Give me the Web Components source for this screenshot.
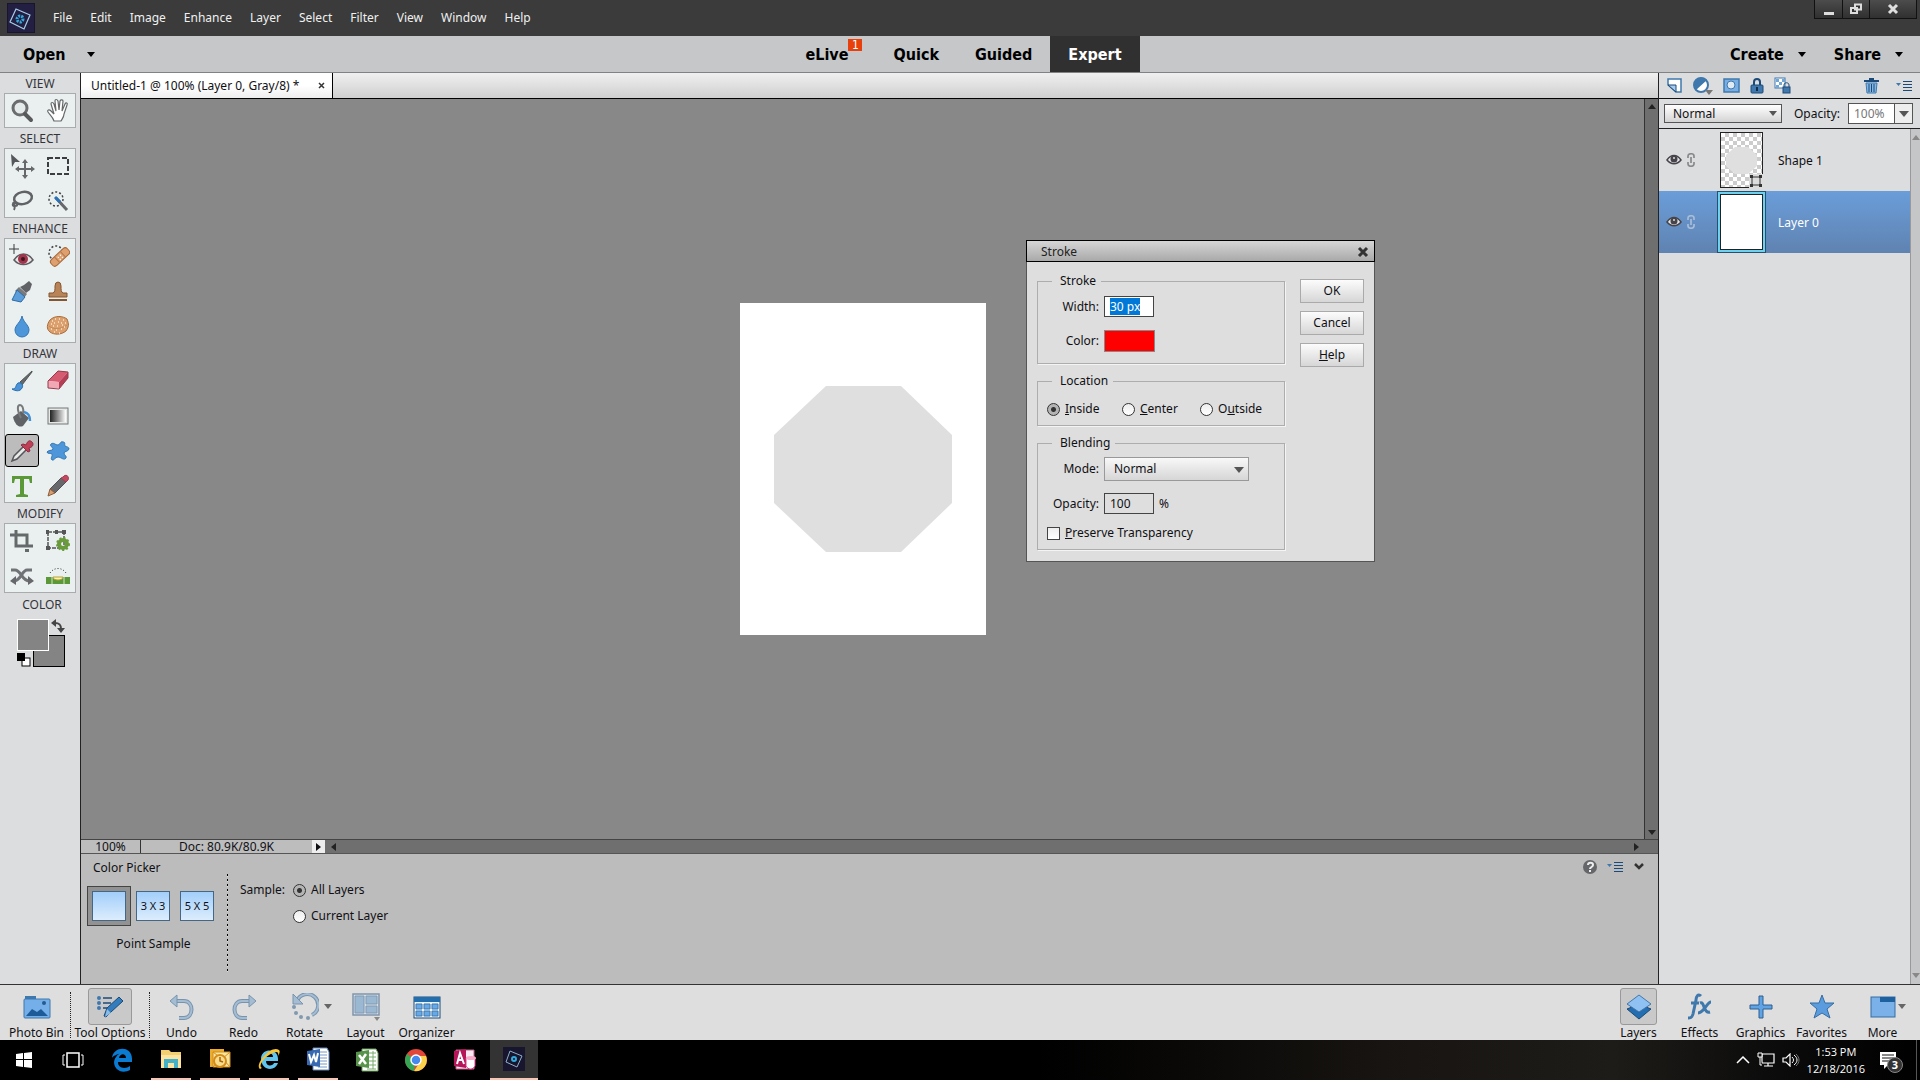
<!DOCTYPE html>
<html lang="en">
<head>
<meta charset="utf-8">
<title>Photo Editor</title>
<style>
  body {
    margin: 0;
    background: #dcdddf;
    color: #101014;
    font: 12px/16px "Noto Sans", "DejaVu Sans Condensed", sans-serif;
  }
</style>
</head>
<body>
<pe-app></pe-app>

<script>
const BLUE = '#3f78ad';
const DARK = '#1c4a78';

// name: [ width, height, markup ]
const ICONS = {
  logo: [28, 30, '<rect width="28" height="30" fill="#17162e"/><rect x="1" y="1" width="26" height="28" fill="#221f42"/><path d="M9 6l14 6-6 14-14-7z" fill="none" stroke="#a7cdea" stroke-width="1.200"/><circle cx="13" cy="16" r="3" fill="none" stroke="#35a9dc" stroke-width="3" stroke-dasharray="2 1"/>'],
  logoSmall: [22, 24, '<rect width="22" height="24" fill="#17162e"/><path d="M7 4l12 5-5 11-11-5z" fill="none" stroke="#8fb0cc"/><circle cx="11" cy="12" r="2" fill="none" stroke="#35a9dc" stroke-width="2"/>'],
  down: [8, 5, '<path d="M0 0h8l-4 5z" fill="currentColor"/>'],
  downBig: [10, 6, '<path d="M0 0h10l-5 6z" fill="#555"/>'],
  up: [8, 5, '<path d="M0 5h8l-4-5z" fill="currentColor"/>'],
  left: [5, 8, '<path d="M5 0v8l-5-4z" fill="currentColor"/>'],
  right: [5, 8, '<path d="M0 0v8l5-4z" fill="currentColor"/>'],
  close: [12, 12, '<path d="M2 2l8 8M10 2l-8 8" stroke="currentColor" stroke-width="3"/>'],
  closeSmall: [8, 8, '<path d="M1 1l5 5M6 1l-5 5" stroke="#333" stroke-width="1.500"/>'],
  minimise: [10, 12, '<path d="M0 9h10v3H0z" fill="#ddd"/>'],
  restore: [12, 12, '<path d="M5 1.500h6v5H5zM1 5h6v5H1z" fill="#333" stroke="#ddd" stroke-width="2"/>'],

  zoom: [24, 24, '<circle cx="10" cy="9" r="7" fill="#e4eaea" stroke="#6a6c6e" stroke-width="3"/><path d="M15 15l6 6" stroke="#58595b" stroke-width="4" stroke-linecap="round"/>'],
  hand: [24, 26, '<path d="M8 23c-1-4-4-6-6-9-1-2 1-3 3-1l3 3L5 6c0-2 2-2 3 0l2 7-1-10c0-2 2-2 3 0l1 9 1-9c1-2 3-1 3 0l-1 10 3-7c1-2 3-1 2 1l-3 9c0 3-2 5-3 7z" fill="#fff" stroke="#66686a" stroke-width="1.200"/>'],
  move: [26, 26, '<path d="M2 1l9 8H6l-3 5z" fill="#55575a"/><path d="M16 8v16M8 16h16" stroke="#66686b" stroke-width="2"/><path d="M13 10l3-4 3 4zM13 22l3 4 3-4zM10 13l-4 3 4 3zM22 13l4 3-4 3z" fill="#66686b"/>'],
  marquee: [24, 20, '<rect x="2" y="2" width="20" height="16" fill="none" stroke="#3c3d40" stroke-width="2" stroke-dasharray="5 2"/>'],
  lasso: [24, 22, '<ellipse cx="13" cy="8" rx="9" ry="6" fill="none" stroke="#606265" stroke-width="2.500" transform="rotate(-12 13 8)"/><path d="M5 12c-3 1-3 4 0 4s3-3 0-3c-2 0 1 4-1 7" fill="none" stroke="#606265" stroke-width="2"/>'],
  wand: [24, 22, '<circle cx="10" cy="9" r="7" fill="none" stroke="#444" stroke-width="1.500" stroke-dasharray="2 2"/><path d="M10 8l11 12" stroke="#66686b" stroke-width="3"/><path d="M9 7l5 5" stroke="#2972b8" stroke-width="3"/>'],
  redeye: [26, 24, '<path d="M5 0v10M0 5h10" stroke="#3b3b3d"/><path d="M5 16c5-8 14-8 19 0-5 6-14 6-19 0z" fill="#e9e4e4" stroke="#5d5b60" stroke-width="1.500"/><circle cx="14" cy="15" r="5" fill="#a1344b"/><circle cx="14" cy="15" r="2" fill="#3b1820"/>'],
  bandage: [24, 24, '<circle cx="10" cy="9" r="7" fill="none" stroke="#444" stroke-width="1.500" stroke-dasharray="2 2"/><g transform="rotate(-43 14 13)"><rect x="3" y="9" width="22" height="8" rx="3" fill="#dfa06f" stroke="#a8683c"/><path d="M10 9v8M18 9v8" stroke="#b5784b"/><path d="M12 12h1M15 12h1M12 15h1M15 15h1" stroke="#fff" stroke-width="1.500"/></g>'],
  smart: [24, 24, '<path d="M14 6l5-4 3 3-2 6-4 3-6-6z" fill="#606265"/><path d="M9 8l8 7-3 4-9-7z" fill="#77797b"/><path d="M7 11l8 7-4 5-9-2z" fill="#5c9edb" stroke="#2d6ba6"/>'],
  stamp: [24, 22, '<path d="M9 6a3 4 0 1 1 6 0c0 4 0 6 2 7h4v4H3v-4h4c2-1 2-3 2-7z" fill="#b98358" stroke="#85552f"/><path d="M3 20h18" stroke="#85552f" stroke-width="2"/>'],
  drop: [20, 24, '<path d="M10 2c1 6 7 9 7 14a7 7 0 0 1-14 0c0-5 6-8 7-14z" fill="#4e96da" stroke="#3376b4"/>'],
  sponge: [24, 22, '<path d="M4 5c5-5 13-4 17-1 2 5 2 8-1 12-5 4-12 4-16 1-4-3-3-8 0-12z" fill="#dba06d" stroke="#a96c3c"/><path d="M3 11c4 4 13 3 18-1" fill="none" stroke="#c58a57"/><path d="M6 6h1M9 4h1M13 4h1M17 5h1M5 9h1M8 8h1M12 7h1M15 8h1M19 8h1M7 11h1M11 11h1M16 10h1M5 14h1M10 15h1M15 14h1M18 12h1M8 17h1M13 18h1" stroke="#fae4cc" stroke-width="1.500"/>'],
  brush: [24, 22, '<path d="M22 1L10 12l2 3L22 2z" fill="#66696c" stroke="#505356"/><path d="M2 19c5 0 3-4 6-6 3-1 6 2 4 5-2 4-7 3-10 1z" fill="#4a93db" stroke="#2b6da8"/>'],
  eraser: [24, 22, '<path d="M12 1l10 1-9 10-11-1z" fill="#d65a70"/><path d="M2 11l11 1v6L2 18z" fill="#f0a9b4"/><path d="M22 2v6l-9 11v-7z" fill="#b53e55"/><path d="M12 1l10 1v6l-9 11-11-1v-7z" fill="none" stroke="#98394b"/>'],
  bucket: [24, 24, '<path d="M3 13l8-6 8 7-6 8c-4 2-8-1-10-9z" fill="#606366"/><path d="M11 14C6 4 8 1 10 1s4 3 3 8" fill="none" stroke="#77797b" stroke-width="2"/><path d="M14 8c5 1 6 4 6 9" fill="none" stroke="#4390d5" stroke-width="2.500"/>'],
  gradient: [22, 18, '<defs><linearGradient id="g"><stop stop-color="#222"/><stop offset="1" stop-color="#fff"/></linearGradient></defs><rect x="1" y="1" width="20" height="16" fill="#e4e8e8" stroke="#777"/><rect x="3" y="3" width="16" height="12" fill="url(#g)"/>'],
  dropper: [24, 24, '<path d="M13 8L4 17l-2 5 5-2 9-9" fill="#e8eaea" stroke="#55575a" stroke-width="1.500"/><path d="M11 6l2-1 3 1c2-5 4-5 6-3s1 5-3 6l1 3-2 1z" fill="#bf3f57" stroke="#8f2b40"/>'],
  blob: [24, 22, '<path d="M5 4c3-2 4 1 7 1 3-1 2-4 5-3 3 0 1 3 2 4 2 1 4 1 4 3-1 3-5 2-5 4s3 3 2 5c-2 3-5-1-8-1s-4 4-6 3c-2-2 1-4 0-6-1-1-5 0-5-2 1-2 5-1 6-3 0-2-4-3-2-5z" fill="#4e96da" stroke="#3376b4"/>'],
  type: [24, 24, '<path d="M2 2h20v7h-2l-1-4h-5v15l4 1v2H6v-2l4-1V5H5L4 9H2z" fill="#5b9838"/>'],
  pencil: [24, 24, '<path d="M15 4l5 4L9 19l-5-4z" fill="#66686b" stroke="#505255"/><path d="M17 3c3-4 7 0 5 3l-2 2-5-4z" fill="#c24a60" stroke="#a33a50"/><path d="M4 15l5 4-7 3z" fill="#d79d73" stroke="#8d5b36"/>'],
  crop: [24, 24, '<path d="M0 6h17v11M6 1v16h17" fill="none" stroke="#66696b" stroke-width="3"/><path d="M15 20h4v3h-4z" fill="#66696b"/>'],
  recompose: [26, 24, '<path d="M3 3h16v16H3z" fill="none" stroke="#555" stroke-width="1.500" stroke-dasharray="4 1"/><path d="M1 1h3v4H1zM17 1h4v4h-4zM1 17h4v4H1zM10 1h3v4h-3z" fill="#555"/><circle cx="18" cy="15" r="4" fill="none" stroke="#699a3b" stroke-width="4"/><circle cx="18" cy="15" r="6" fill="none" stroke="#699a3b" stroke-width="2" stroke-dasharray="2 2"/>'],
  content: [24, 20, '<path d="M1 4h4c6 0 7 11 14 11M22 4h-5C12 4 11 15 4 15" fill="none" stroke="#707275" stroke-width="3"/><path d="M6 10v9l-6-4zM18 10v9l6-4z" fill="#65676a"/>'],
  straighten: [26, 18, '<path d="M1 10h24v7H1z" fill="#5b9838"/><path d="M7 10v7M19 10v7" stroke="#d4e5c8"/><path d="M8 10h10c0 4-10 4-10 0" fill="#fff2a6" stroke="#b4a23c"/><path d="M5 6c4-6 12-6 16 0" fill="none" stroke="#333" stroke-dasharray="1 2"/>'],
  swap: [14, 14, '<path d="M4 4c5 0 6 2 6 6" fill="none" stroke="#444" stroke-width="2"/><path d="M5 0v8L0 4zM6 9h8l-4 5z" fill="#444"/>'],
  defaults: [14, 14, '<rect x="5" y="5" width="8" height="8" fill="#fff" stroke="#000"/><rect width="8" height="8"/>'],

  newLayer: [16, 16, `<path d="M1 1h13v13H9L1 7z" fill="#fff" stroke="${BLUE}" stroke-width="1.500"/><path d="M1 7l8 7V7z" fill="#a6cdf0" stroke="${DARK}"/>`],
  adjust: [20, 18, `<circle cx="8" cy="8" r="7" fill="#fff" stroke="${BLUE}" stroke-width="2"/><path d="M14 3A7 7 0 1 0 3 13z" fill="${BLUE}"/><path d="M12 13h8l-4 5z" fill="#777"/>`],
  mask: [17, 15, `<rect x="1" y="1" width="15" height="13" fill="#78aee3" stroke="${BLUE}" stroke-width="1.500"/><circle cx="8" cy="7" r="4" fill="#dfeaf3" stroke="${BLUE}"/>`],
  lock: [14, 16, `<path d="M4 8V4c0-4 6-4 6 0v4" fill="none" stroke="${DARK}" stroke-width="2"/><rect x="1" y="7" width="12" height="8" rx="1" fill="${BLUE}" stroke="${DARK}"/><path d="M7 9v4" stroke="#122c48" stroke-width="2"/>`],
  lockPixels: [17, 17, `<rect x="1" y="1" width="10" height="10" fill="#fff" stroke="${BLUE}"/><path d="M2 2h3v3H2zM8 2h3v3H8zM5 5h3v3H5zM2 8h3v3H2z" fill="#72a6d5"/><path d="M10 10V8c0-3 5-3 5 0v2" fill="none" stroke="${DARK}"/><rect x="9" y="10" width="7" height="6" fill="${BLUE}" stroke="${DARK}"/>`],
  trash: [15, 16, `<path d="M0 3h15M5 1h5" stroke="${DARK}" stroke-width="2"/><path d="M2 5h11l-1 10H3z" fill="#82b7e8" stroke="${BLUE}"/><path d="M5 6v8M7.500 6v8M10 6v8" stroke="${DARK}"/>`],
  list: [16, 12, `<path d="M0 3h5L2.500 6z" fill="${BLUE}"/><path d="M7 1h9v1H7zM7 4h9v1H7zM7 7h9v1H7zM7 10h9v1H7z" fill="${DARK}"/>`],
  eye: [16, 12, '<path d="M1 6c4-6 10-6 14 0-4 5-10 5-14 0z" fill="#e6e6e8" stroke="#46444a" stroke-width="1.500"/><circle cx="8" cy="5" r="3.500" fill="#46444a"/><circle cx="8" cy="4" r="1" fill="#ddd"/>'],
  link: [8, 14, '<path d="M1 5V3c0-3 6-3 6 0v2M1 9v2c0 3 6 3 6 0V9M4 4v6" fill="none" stroke="currentColor" stroke-width="1.700"/>'],
  shape: [12, 12, '<path d="M2 2h8v8H2z" fill="none" stroke="#333"/><path d="M0 0h3v3H0zM9 0h3v3H9zM0 9h3v3H0zM9 9h3v3H9z" fill="#333"/>'],
  help: [14, 14, '<circle cx="7" cy="7" r="7" fill="#65666a"/><path d="M5 5c0-3 5-3 5 0 0 2-3 2-3 4M7 10v2" fill="none" stroke="#eee" stroke-width="2"/>'],
  chevron: [12, 8, '<path d="M2 1l4 4 4-4" fill="none" stroke="#333" stroke-width="2.500"/>'],

  photoBin: [28, 24, `<path d="M2 1h11v3H2z" fill="${BLUE}"/><rect x="1" y="4" width="26" height="19" rx="1" fill="#75afe9" stroke="${BLUE}"/><path d="M3 21l6-7 5 3 4-3 7 7z" fill="#1d5a98"/><circle cx="21" cy="8" r="2" fill="#245b91"/>`],
  toolOptions: [28, 24, `<path d="M7 3h9M7 8h8M7 13h5" stroke="${DARK}" stroke-width="1.500"/><g fill="${BLUE}"><circle cx="3" cy="3" r="2"/><circle cx="3" cy="8" r="2"/><circle cx="3" cy="13" r="2"/></g><path d="M23 2l4 4-12 11-5 5-2-1 3-8z" fill="#337dbd" stroke="${DARK}"/><path d="M11 14l4 4-6 4z" fill="#8abce8"/>`],
  undo: [26, 26, '<path d="M7 7h8c10 0 10 17 0 17h-5" fill="none" stroke="#7894ad" stroke-width="4"/><path d="M7 7h8c10 0 10 17 0 17h-5" fill="none" stroke="#a4bdd3" stroke-width="2"/><path d="M8 1v12L1 7z" fill="#a4bdd3" stroke="#7894ad"/>'],
  redo: [26, 26, '<path d="M19 7h-8c-10 0-10 17 0 17h5" fill="none" stroke="#7894ad" stroke-width="4"/><path d="M19 7h-8c-10 0-10 17 0 17h5" fill="none" stroke="#a4bdd3" stroke-width="2"/><path d="M18 1v12l7-6z" fill="#a4bdd3" stroke="#7894ad"/>'],
  rotate: [28, 28, '<path d="M6 8a11 11 0 1 1 15 14" fill="none" stroke="#7894ad" stroke-width="4"/><path d="M6 8a11 11 0 1 1 15 14" fill="none" stroke="#a4bdd3" stroke-width="2"/><path d="M2 1v10h10z" fill="#a4bdd3" stroke="#7894ad"/><g fill="#8199af"><circle cx="3" cy="14" r="2"/><circle cx="5" cy="20" r="2"/><circle cx="10" cy="24" r="2"/><circle cx="17" cy="25" r="2"/></g>'],
  layout: [28, 28, '<rect x="1" y="1" width="26" height="21" fill="#d5dfe8" stroke="#8095aa" stroke-width="1.500"/><path d="M3 3h9v17H3zM14 3h11v8H14zM14 13h11v7H14z" fill="#9bb8d3" stroke="#8199b0"/><path d="M22 24h6l-3 4z" fill="#888"/>'],
  organizer: [28, 24, `<rect x="1" y="2" width="26" height="21" fill="#eaf3fa" stroke="${DARK}"/><path d="M1 2h26v5H1z" fill="#236fae"/><path d="M3 9h6v5H3zM11 9h6v5h-6zM19 9h6v5h-6zM3 16h6v5H3zM11 16h6v5h-6zM19 16h6v5h-6z" fill="#67a9e6" stroke="${BLUE}"/>`],
  layers: [28, 26, `<path d="M2 15l5-2 7 5 7-5 5 2-12 10z" fill="#236eb0" stroke="${DARK}"/><path d="M14 1l12 9-12 8L2 10z" fill="#8fc1f2" stroke="#4378ac"/>`],
  fx: [26, 28, `<path d="M14 3c-3-3-5 1-5 4L6 21c-1 4-3 4-5 4M4 10h8" fill="none" stroke="${BLUE}" stroke-width="3"/><path d="M13 10c5-2 3 11 10 9M24 9c-4 0-7 11-13 11" fill="none" stroke="${BLUE}" stroke-width="3"/>`],
  plus: [24, 24, '<path d="M10 1h4v9h9v4h-9v9h-4v-9H1v-4h9z" fill="#5da3e5" stroke="#315f8f"/>'],
  star: [26, 26, '<path d="M13 1l3 8h9l-7 6 3 9-8-5-8 5 3-9-7-6h9z" fill="#5b9cde" stroke="#366da3"/>'],
  more: [26, 24, '<rect x="1" y="2" width="24" height="20" fill="#79b1e8" stroke="#366da3"/><path d="M10 2h15v5H10z" fill="#1d61a1"/>'],

  windows: [18, 18, '<path d="M1 3l7-1v6H1zM9 2l8-1v7H9zM1 9h7v7l-7-1zM9 9h8v8l-8-1z" fill="#fff"/>'],
  taskView: [22, 16, '<rect x="5" y="1" width="12" height="14" fill="none" stroke="#fff" stroke-width="1.500"/><path d="M3 3H1v10h2M19 3h2v10h-2" fill="none" stroke="#fff"/>'],
  edge: [22, 24, '<path d="M1 10C2-2 21-3 21 11v3H7c0 7 8 7 12 4v4C8 28-1 17 5 9c2-3 4-4 6-4-5 1-9 3-10 5zM8 10h7c0-5-6-5-7 0z" fill="#0b7bd2"/>'],
  explorer: [22, 20, '<path d="M1 1h8l2 2h10v16H1z" fill="#f2cf70"/><path d="M1 6h20v13H1z" fill="#fce4a0"/><path d="M4 10h14v9h-4v-5H8v5H4z" fill="#43b0c8"/>'],
  outlook: [24, 24, '<path d="M2 2h14v18H2z" fill="#ecac2c"/><path d="M5 5h17v15H5z" fill="#fae6a2" stroke="#d48b19"/><path d="M5 5l9 7 8-7M5 20l7-8M22 20l-7-8" stroke="#d48b19" fill="none"/><circle cx="12" cy="14" r="6" fill="#f8dc8c" stroke="#d48b19" stroke-width="2"/><path d="M12 10v4l3 1" stroke="#a8640c" fill="none" stroke-width="1.500"/>'],
  ie: [24, 24, '<path d="M4 11C5 1 21 1 21 12v2H9c0 6 7 5 8 2h4c-3 9-17 8-17-5zM9 10h7c0-5-7-5-7 0z" fill="#62c5ef"/><path d="M3 22C-3 18 14-3 22 3c2 2-1 6-1 6 1-4-1-5-5-3C9 8 0 19 5 21c-2 1-2 1-2 1z" fill="#f6c435"/>'],
  word: [24, 24, '<path d="M7 1h14l2 4v18H7z" fill="#fff" stroke="#5d84bb"/><path d="M12 5h9M12 8h9M12 11h9M12 14h9M12 17h9M12 20h9" stroke="#7799c6"/><path d="M1 4l13-2v18L1 18z" fill="#376ab0"/><path d="M3 7l2 8 3-7 2 7 2-9" fill="none" stroke="#fff" stroke-width="2"/>'],
  excel: [24, 24, '<path d="M7 1h14l2 4v18H7z" fill="#fff" stroke="#6aa058"/><path d="M12 5h9M12 9h9M12 13h9M12 17h9M12 21h9M18 3v18" stroke="#77ac68"/><path d="M1 4l13-2v18L1 18z" fill="#57934a"/><path d="M4 7l7 9M11 6l-7 10" stroke="#fff" stroke-width="2.500"/>'],
  chrome: [24, 24, '<circle cx="12" cy="12" r="11" fill="#e2463a"/><path d="M12 12L3 6a11 11 0 0 0 7 17z" fill="#35a554"/><path d="M12 8h10A11 11 0 0 1 10 23l6-9z" fill="#fdd24b"/><circle cx="12" cy="12" r="5" fill="#4589ef" stroke="#fff" stroke-width="1.500"/>'],
  access: [24, 24, '<path d="M3 2h18v19H3z" fill="#f8e8ef" stroke="#cd5689"/><path d="M1 3l12-2v19L1 18z" fill="#b61559"/><path d="M4 16l3-11 4 11M5 12h5" fill="none" stroke="#fff" stroke-width="2"/><path d="M13 10h9v8c-2 4-7 4-9 0z" fill="#fff" stroke="#df3787"/><ellipse cx="18" cy="10" rx="5" ry="2" fill="#f7a9c9"/>'],
  caretUp: [14, 8, '<path d="M1 7l6-6 6 6" fill="none" stroke="#fff" stroke-width="1.500"/>'],
  network: [18, 16, '<path d="M5 2h12v9H5zM11 11v3M7 14h9" fill="none" stroke="#fff" stroke-width="1.200"/><path d="M1 1h4v4H1zM3 5v8h2" fill="#111" stroke="#fff"/>'],
  speaker: [18, 14, '<path d="M1 5h3l4-4v12L4 9H1z" fill="none" stroke="#fff" stroke-width="1.200"/><path d="M10 4c2 2 2 4 0 6M12 2c4 3 4 7 0 10" fill="none" stroke="#fff"/><path d="M14 1c4 4 4 8 0 12" fill="none" stroke="#777"/>'],
  notes: [18, 18, '<path d="M1 1h16v13H9l-4 4v-4H1z" fill="#fff"/><path d="M3 4h12M3 7h12M3 10h9" stroke="#111"/>']
};

// Shared shadow root setup
class Base extends HTMLElement {
  constructor() {
    super();
    const template = document.createElement( 'template' );
    template.innerHTML = this.constructor.markup;
    this.attachShadow( {mode: 'open'} );
    this.shadowRoot.appendChild( template.content.cloneNode( true ) );
  }
}

const RESET = `
  :host, * { box-sizing: border-box; }
  button, input, select { margin: 0; padding: 0; font: inherit; color: inherit; border-radius: 0; }
  button { border: 0; background: none; }
`;

class Icon extends HTMLElement {
  constructor() {
    super();
    this.attachShadow( {mode: 'open'} );
  }

  connectedCallback() {
    const [w, h, art] = ICONS[this.getAttribute( 'name' )];
    this.shadowRoot.innerHTML = `
      <style>:host { display: inline-flex; flex: none; } svg { display: block; }</style>
      <svg width="${w}" height="${h}" viewBox="0 0 ${w} ${h}" aria-hidden="true">${art}</svg>
    `;
  }
}
customElements.define( 'pe-icon', Icon );

// Title bar with menus and window buttons
class MenuBar extends Base {
  static markup = `
    <style>
      ${RESET}
      :host {
        display: flex;
        height: 36px;
        padding: 0 3px 0 7px;
        align-items: center;
        background: #3b3b3b;
        color: #f0f0f0;
      }
      nav { display: flex; flex: 1; gap: 18px; padding-left: 18px; }
      .window {
        display: flex;
        align-self: flex-start;
        height: 19px;
        border: 1px solid #111;
        border-top: 0;
        background: linear-gradient(#4c4c4c, #303030);
        color: #ddd;
      }
      .window button { display: flex; width: 27px; align-items: center; justify-content: center; }
      .window button + button { border-left: 1px solid #111; }
      .window button:last-child { width: 47px; }
    </style>
    <pe-icon name="logo"></pe-icon>
    <nav>
      <button>File</button><button>Edit</button><button>Image</button><button>Enhance</button>
      <button>Layer</button><button>Select</button><button>Filter</button><button>View</button>
      <button>Window</button><button>Help</button>
    </nav>
    <div class="window">
      <button aria-label="Minimize"><pe-icon name="minimise"></pe-icon></button>
      <button aria-label="Restore"><pe-icon name="restore"></pe-icon></button>
      <button aria-label="Close"><pe-icon name="close"></pe-icon></button>
    </div>
  `;
}
customElements.define( 'pe-menu-bar', MenuBar );

class ModeBar extends Base {
  static markup = `
    <style>
      ${RESET}
      :host {
        display: grid;
        grid-template-columns: 1fr auto 1fr;
        height: 37px;
        background: #c5c7c9;
        border-bottom: 1px solid #808284;
        color: #000;
        font: bold 16px/20px "DejaVu Sans Condensed", "Noto Sans", sans-serif;
      }
      div { display: flex; }
      button { display: flex; padding-top: 1px; align-items: center; }
      .open { padding-left: 23px; gap: 21px; }
      .modes { padding-left: 7px; }
      .modes button { position: relative; padding: 1px 18px 0; }
      .modes .live { padding-right: 27px; }
      .modes .active { background: #303030; color: #fff; }
      .badge {
        position: absolute;
        top: 3px;
        right: 13px;
        width: 14px;
        background: #e8400c;
        color: #fff;
        font: 12px/12px "DejaVu Sans Condensed", sans-serif;
      }
      .right { justify-content: flex-end; gap: 28px; padding-right: 17px; }
      .right button { gap: 14px; }
    </style>
    <div><button class="open">Open <pe-icon name="down"></pe-icon></button></div>
    <div class="modes">
      <button class="live">eLive<span class="badge">1</span></button>
      <button>Quick</button>
      <button>Guided</button>
      <button class="active">Expert</button>
    </div>
    <div class="right">
      <button>Create <pe-icon name="down"></pe-icon></button>
      <button>Share <pe-icon name="down"></pe-icon></button>
    </div>
  `;
}
customElements.define( 'pe-mode-bar', ModeBar );

// A titled block of tool buttons
class ToolGroup extends HTMLElement {
  constructor() {
    super();
    this.attachShadow( {mode: 'open'} );
  }

  connectedCallback() {
    const active = this.getAttribute( 'active' );
    const tools = this.getAttribute( 'tools' ).split( ' ' );
    this.shadowRoot.innerHTML = `
      <style>
        ${RESET}
        :host { display: block; }
        h2 { height: 20px; margin: 0; font: inherit; line-height: 22px; text-align: center; color: #333439; }
        div {
          display: grid;
          grid-template-columns: 1fr 1fr;
          grid-auto-rows: 35px;
          background: #e9f0ef;
          box-shadow: inset 0 0 0 1px #a9abad;
        }
        button { display: flex; align-items: center; justify-content: center; }
        .active { margin: 1px; border: 1px solid #000; border-radius: 3px; background: #bcbcbc; }
      </style>
      <h2>${this.getAttribute( 'label' )}</h2>
      <div>
        ${tools.map( ( tool ) => `<button class="${tool === active ? 'active' : ''}" aria-label="${tool}"><pe-icon name="${tool}"></pe-icon></button>` ).join( '' )}
      </div>
    `;
  }
}
customElements.define( 'pe-tool-group', ToolGroup );

class Toolbox extends Base {
  static markup = `
    <style>
      ${RESET}
      :host { display: block; padding: 0 4px; background: #dcdddf; border-right: 1px solid #222; }
      h2 { margin: 0; padding-left: 4px; font: inherit; line-height: 24px; text-align: center; color: #333439; }
      .colors { position: relative; width: 48px; height: 48px; margin: 2px 0 0 13px; }
      .colors button { position: absolute; width: 32px; height: 32px; background: #848484; }
      .front { left: 0; top: 0; border: 1px solid #fff; }
      .back { right: 0; bottom: 0; border: 1px solid #000; }
      .swap { position: absolute; right: 0; top: 0; }
      .defaults { position: absolute; left: 0; bottom: 0; }
    </style>
    <pe-tool-group label="VIEW" tools="zoom hand"></pe-tool-group>
    <pe-tool-group label="SELECT" tools="move marquee lasso wand"></pe-tool-group>
    <pe-tool-group label="ENHANCE" tools="redeye bandage smart stamp drop sponge"></pe-tool-group>
    <pe-tool-group label="DRAW" tools="brush eraser bucket gradient dropper blob type pencil" active="dropper"></pe-tool-group>
    <pe-tool-group label="MODIFY" tools="crop recompose content straighten"></pe-tool-group>
    <h2>COLOR</h2>
    <div class="colors">
      <button class="back" aria-label="Background color"></button>
      <button class="front" aria-label="Foreground color"></button>
      <pe-icon class="swap" name="swap"></pe-icon>
      <pe-icon class="defaults" name="defaults"></pe-icon>
    </div>
  `;
}
customElements.define( 'pe-toolbox', Toolbox );

const RADIO = `
  input[type=radio] {
    appearance: none;
    width: 13px;
    height: 13px;
    flex: none;
    border: 1px solid #333;
    border-radius: 50%;
    background: linear-gradient(#eee, #fff);
  }
  input[type=radio]:checked { background: radial-gradient(#333 0 2px, #b4b4b4 3px); }
`;

class StrokeDialog extends Base {
  static markup = `
    <style>
      ${RESET}
      ${RADIO}
      :host { display: block; width: 349px; background: #dedede; border: 1px solid #555; }
      header {
        display: flex;
        height: 22px;
        margin: -1px -1px 0;
        padding: 1px 5px 0 14px;
        align-items: center;
        justify-content: space-between;
        border: 1px solid #000;
        background: linear-gradient(#d6d6d6, #a9a9a9);
        color: #222;
      }
      header button { display: flex; color: #333; }
      .body { display: flex; gap: 15px; padding: 11px 10px 11px; }
      form { display: flex; flex: 1; flex-direction: column; gap: 9px; }
      fieldset {
        min-width: 0;
        margin: 0;
        padding: 0 9px;
        border: 1px solid #adadad;
        outline: 0;
        box-shadow: 1px 1px #f4f4f4;
      }
      legend { margin-left: 5px; padding: 0 5px 0 8px; }
      .row { display: grid; grid-template-columns: 52px auto 1fr; column-gap: 5px; align-items: center; }
      .row > label:first-child { text-align: right; white-space: nowrap; justify-self: end; }
      .stroke { height: 91px; padding-top: 7px; }
      .stroke .row + .row { margin-top: 13px; }
      input[type=text] { width: 50px; height: 21px; padding: 0 5px; border: 1px solid #444; background: #fff; }
      input::selection { background: #0078d7; color: #fff; }
      input:focus { outline: 0; }
      .swatch { width: 51px; height: 22px; border: 1px solid #888; background: #f00; }
      .location { height: 53px; }
      .choices { display: grid; grid-template-columns: 75px 78px auto; padding-top: 12px; }
      .choices label, .check { display: flex; gap: 5px; align-items: center; white-space: nowrap; }
      .blending { height: 115px; padding-top: 6px; }
      .select { position: relative; }
      select {
        appearance: none;
        width: 145px;
        height: 24px;
        padding: 0 9px;
        border: 1px solid #999;
        background: linear-gradient(#f8f8f8, #d6d6d6);
      }
      .select pe-icon { position: absolute; right: 5px; top: 10px; pointer-events: none; }
      .blending .row + .row { margin-top: 12px; }
      .blending input[type=text] { background: #dedede; }
      .check { margin-top: 11px; }
      input[type=checkbox] { appearance: none; width: 13px; height: 13px; border: 1px solid #444; background: linear-gradient(#eee, #fff); }
      .actions { display: flex; flex-direction: column; gap: 8px; padding-top: 6px; }
      .actions button {
        width: 64px;
        height: 24px;
        border: 1px solid #aaa;
        background: linear-gradient(#fcfcfc, #d6d6d6);
      }
    </style>
    <header>Stroke <button aria-label="Close"><pe-icon name="close"></pe-icon></button></header>
    <div class="body">
      <form>
        <fieldset class="stroke">
          <legend>Stroke</legend>
          <div class="row"><label for="width">Width:</label><input type="text" id="width" value="30 px"></div>
          <div class="row"><label for="color">Color:</label><button type="button" id="color" class="swatch"></button></div>
        </fieldset>
        <fieldset class="location">
          <legend>Location</legend>
          <div class="choices">
            <label><input type="radio" name="location" checked><span><u>I</u>nside</span></label>
            <label><input type="radio" name="location"><span><u>C</u>enter</span></label>
            <label><input type="radio" name="location"><span>O<u>u</u>tside</span></label>
          </div>
        </fieldset>
        <fieldset class="blending">
          <legend>Blending</legend>
          <div class="row">
            <label for="mode">Mode:</label>
            <span class="select"><select id="mode"><option>Normal</option></select><pe-icon name="downBig"></pe-icon></span>
          </div>
          <div class="row"><label for="opacity">Opacity:</label><input type="text" id="opacity" value="100"><span>%</span></div>
          <label class="check"><input type="checkbox"><span><u>P</u>reserve Transparency</span></label>
        </fieldset>
      </form>
      <div class="actions">
        <button>OK</button>
        <button>Cancel</button>
        <button><u>H</u>elp</button>
      </div>
    </div>
  `;

  // The width is ready to be typed over
  connectedCallback() {
    const $width = this.shadowRoot.querySelector( '#width' );
    $width.focus();
    $width.select();
  }
}
customElements.define( 'pe-stroke-dialog', StrokeDialog );

class DocumentView extends Base {
  static markup = `
    <style>
      ${RESET}
      :host { display: flex; flex-direction: column; min-width: 0; background: #888; }
      .tabs { display: flex; height: 26px; border-bottom: 1px solid #000; background: linear-gradient(#f0f0f0, #cfcfcf); }
      .tab { display: flex; gap: 19px; align-items: center; padding: 0 6px 0 10px; border-right: 1px solid #000; background: linear-gradient(#fff 50%, #eee); }
      .tab button { display: flex; }
      .view { display: flex; flex: 1; }
      .canvas { position: relative; display: flex; flex: 1; align-items: center; justify-content: center; }
      .page { display: block; background: #fff; }
      pe-stroke-dialog { position: absolute; left: 945px; top: 141px; }
      .scroll {
        display: flex;
        flex-direction: column;
        width: 14px;
        padding: 5px 0 4px;
        align-items: center;
        justify-content: space-between;
        background: #6f6f6f;
        border-left: 1px solid #333;
        color: #222;
      }
      .status { display: flex; height: 15px; border-top: 1px solid #444; border-bottom: 1px solid #555; line-height: 14px; }
      .status span { background: #bdbdbd; text-align: center; }
      .zoom { width: 60px; border-right: 1px solid #333; }
      .info { width: 171px; }
      .status button { display: flex; width: 13px; align-items: center; justify-content: center; background: #eee; }
      .bar { display: flex; flex: 1; padding: 0 19px 0 6px; align-items: center; justify-content: space-between; background: #6f6f6f; color: #222; }
    </style>
    <div class="tabs">
      <div class="tab">Untitled-1 @ 100% (Layer 0, Gray/8) * <button aria-label="Close tab"><pe-icon name="closeSmall"></pe-icon></button></div>
    </div>
    <div class="view">
      <div class="canvas">
        <svg class="page" width="246" height="332" viewBox="0 0 246 332"><path d="M86 83h75l51 49v68l-51 49H86l-52-49v-68z" fill="#dfdfdf"/></svg>
        <pe-stroke-dialog></pe-stroke-dialog>
      </div>
      <div class="scroll"><pe-icon name="up"></pe-icon><pe-icon name="down"></pe-icon></div>
    </div>
    <div class="status">
      <span class="zoom">100%</span><span class="info">Doc: 80.9K/80.9K</span>
      <button aria-label="Status options"><pe-icon name="right"></pe-icon></button>
      <div class="bar"><pe-icon name="left"></pe-icon><pe-icon name="right"></pe-icon></div>
    </div>
  `;
}
customElements.define( 'pe-document-view', DocumentView );

class ToolOptions extends Base {
  static markup = `
    <style>
      ${RESET}
      ${RADIO}
      :host { display: flex; height: 130px; background: #bcbcbc; }
      .picker { width: 146px; padding: 6px 0 0 6px; }
      h2 { margin: 0 0 10px 6px; font: inherit; }
      .sizes { display: flex; height: 40px; }
      .sizes button { width: 44px; padding: 4px; border: 1px solid transparent; }
      .sizes span {
        display: block;
        height: 30px;
        line-height: 28px;
        border: 1px solid #456783;
        background: linear-gradient(#a2cefa, #dcedfd);
        font-size: 11px;
        white-space: nowrap;
      }
      .sizes .active { border-color: #444; background: #929292; }
      p { margin: 10px 0 0; padding-right: 7px; text-align: center; }
      .divider { width: 1px; height: 100px; margin: 20px 12px 0 0; background: repeating-linear-gradient(#000 0 2px, #ddd 2px 3px, transparent 3px 5px); }
      .sample { display: grid; grid-template-columns: 53px auto; align-content: start; row-gap: 10px; padding-top: 28px; }
      .sample label { grid-column: 2; display: flex; gap: 5px; align-items: center; }
      .sample > span { grid-row: 1; }
      .tools { display: flex; flex: 1; gap: 10px; height: 26px; padding-right: 13px; align-items: center; justify-content: flex-end; }
      .tools button { display: flex; }
    </style>
    <div class="picker">
      <h2>Color Picker</h2>
      <div class="sizes">
        <button class="active" aria-label="Point Sample"><span></span></button>
        <button><span>3 X 3</span></button>
        <button><span>5 X 5</span></button>
      </div>
      <p>Point Sample</p>
    </div>
    <div class="divider"></div>
    <div class="sample">
      <span>Sample:</span>
      <label><input type="radio" name="sample" checked>All Layers</label>
      <label><input type="radio" name="sample">Current Layer</label>
    </div>
    <div class="tools">
      <button aria-label="Help"><pe-icon name="help"></pe-icon></button>
      <button aria-label="Options"><pe-icon name="list"></pe-icon></button>
      <button aria-label="Collapse"><pe-icon name="chevron"></pe-icon></button>
    </div>
  `;
}
customElements.define( 'pe-tool-options', ToolOptions );

// Layer row, thumbnail content comes through the slot
class LayerRow extends Base {
  static markup = `
    <style>
      ${RESET}
      :host {
        display: grid;
        grid-template-columns: 15px 35px 49px auto;
        height: 62px;
        padding-left: 7px;
        align-items: center;
        justify-content: start;
      }
      :host( [selected] ) { background: linear-gradient(#6b9dd9, #5f83b1); color: #fff; }
      button { display: flex; }
      .link { padding-left: 6px; color: #88898b; }
      :host( [selected] ) .link { color: #a9bdd6; }
      .thumb { position: relative; width: 43px; height: 56px; margin-left: 4px; border: 1px solid #222; background: #fff; }
      :host( [selected] ) .thumb { box-shadow: 0 0 0 2px #6dd2f2, 0 0 0 3px #28506e; }
      .name { padding: 2px 0 0 13px; }
    </style>
    <button aria-label="Visibility"><pe-icon name="eye"></pe-icon></button>
    <button class="link" aria-label="Link"><pe-icon name="link"></pe-icon></button>
    <div class="thumb"><slot name="thumb"></slot></div>
    <div class="name"><slot></slot></div>
  `;
}
customElements.define( 'pe-layer-row', LayerRow );

class LayersPanel extends Base {
  static markup = `
    <style>
      ${RESET}
      :host { display: flex; flex-direction: column; background: #dcdddf; border-left: 1px solid #222; }
      .tools { display: flex; height: 26px; gap: 10px; padding: 0 8px; align-items: center; border-bottom: 1px solid #111; }
      .tools button { display: flex; }
      .tools .trash { margin-left: auto; margin-right: 7px; }
      .blend { display: flex; height: 30px; padding: 0 7px 0 5px; align-items: center; border-bottom: 1px solid #222; }
      .select { position: relative; }
      select { appearance: none; width: 118px; height: 19px; padding: 0 8px; border: 1px solid #555; background: linear-gradient(#fff, #d4d4d4); }
      .select pe-icon { position: absolute; right: 5px; top: 7px; color: #555; }
      .blend label { margin-left: auto; padding-right: 8px; }
      input { width: 47px; height: 21px; padding: 0 5px; border: 1px solid #555; background: #fff; color: #777; }
      .drop { display: flex; width: 19px; height: 21px; margin-left: -1px; align-items: center; justify-content: center; border: 1px solid #555; background: #eee; }
      .area { display: flex; flex: 1; }
      .rows { flex: 1; }
      .checker { height: 100%; background: repeating-conic-gradient(#ccc 0 25%, #fff 0 50%) 0 0 / 8px 8px; }
      .checker svg { display: block; }
      .badge { position: absolute; right: -1px; bottom: -1px; padding: 1px; background: #ddd; }
      .scroll {
        display: flex;
        flex-direction: column;
        width: 10px;
        padding: 6px 0;
        align-items: center;
        justify-content: space-between;
        background: #c5c6c8;
        border-left: 1px solid #999;
        color: #888;
      }
    </style>
    <div class="tools">
      <button aria-label="New layer"><pe-icon name="newLayer"></pe-icon></button>
      <button aria-label="Adjustment"><pe-icon name="adjust"></pe-icon></button>
      <button aria-label="Mask"><pe-icon name="mask"></pe-icon></button>
      <button aria-label="Lock all"><pe-icon name="lock"></pe-icon></button>
      <button aria-label="Lock pixels"><pe-icon name="lockPixels"></pe-icon></button>
      <button class="trash" aria-label="Delete"><pe-icon name="trash"></pe-icon></button>
      <button aria-label="Panel menu"><pe-icon name="list"></pe-icon></button>
    </div>
    <div class="blend">
      <span class="select"><select aria-label="Blend mode"><option>Normal</option></select><pe-icon name="down"></pe-icon></span>
      <label for="opacity">Opacity:</label>
      <input id="opacity" value="100%">
      <button class="drop" aria-label="Opacity slider"><pe-icon name="downBig"></pe-icon></button>
    </div>
    <div class="area">
      <div class="rows">
        <pe-layer-row>
          <div slot="thumb" class="checker">
            <svg width="41" height="54"><path d="M14 14h13l9 8v11l-9 8H14l-9-8V22z" fill="#dfdfdf"/></svg>
            <pe-icon class="badge" name="shape"></pe-icon>
          </div>
          Shape 1
        </pe-layer-row>
        <pe-layer-row selected>Layer 0</pe-layer-row>
      </div>
      <div class="scroll"><pe-icon name="up"></pe-icon><pe-icon name="down"></pe-icon></div>
    </div>
  `;
}
customElements.define( 'pe-layers-panel', LayersPanel );

class DockButton extends Base {
  static markup = `
    <style>
      ${RESET}
      :host { display: block; }
      button { display: flex; width: 100%; flex-direction: column; align-items: center; white-space: nowrap; }
      .icon {
        position: relative;
        display: flex;
        width: var(--icon-width, 44px);
        height: 37px;
        align-items: center;
        justify-content: center;
        border: 1px solid transparent;
        border-radius: 3px;
      }
      :host( [active] ) .icon { border-color: #999; background: #c9c9c9; }
      .caret { position: absolute; right: -6px; top: 15px; display: none; color: #666; }
      :host( [menu] ) .caret { display: block; }
    </style>
    <button>
      <span class="icon"><slot name="icon"></slot><pe-icon class="caret" name="down"></pe-icon></span>
      <span><slot></slot></span>
    </button>
  `;
}
customElements.define( 'pe-dock-button', DockButton );

class Dock extends Base {
  static markup = `
    <style>
      ${RESET}
      :host { display: flex; height: 56px; padding-top: 3px; justify-content: space-between; background: #dedede; border-top: 1px solid #333; }
      div { display: flex; }
      pe-dock-button { width: 61px; }
      .left { padding-left: 6px; }
      hr { height: 46px; width: 1px; margin: 4px 3px 0 3px; border: 0; border-left: 1px dotted #222; }
      .left .wide { width: 72px; }
      .left hr ~ hr { margin-right: 0; }
      .left .undo { width: 63px; }
      .right { --icon-width: 37px; padding-right: 7px; }
    </style>
    <div class="left">
      <pe-dock-button><pe-icon slot="icon" name="photoBin"></pe-icon>Photo Bin</pe-dock-button>
      <hr>
      <pe-dock-button class="wide" active><pe-icon slot="icon" name="toolOptions"></pe-icon>Tool Options</pe-dock-button>
      <hr>
      <pe-dock-button class="undo"><pe-icon slot="icon" name="undo"></pe-icon>Undo</pe-dock-button>
      <pe-dock-button><pe-icon slot="icon" name="redo"></pe-icon>Redo</pe-dock-button>
      <pe-dock-button menu><pe-icon slot="icon" name="rotate"></pe-icon>Rotate</pe-dock-button>
      <pe-dock-button><pe-icon slot="icon" name="layout"></pe-icon>Layout</pe-dock-button>
      <pe-dock-button><pe-icon slot="icon" name="organizer"></pe-icon>Organizer</pe-dock-button>
    </div>
    <div class="right">
      <pe-dock-button active><pe-icon slot="icon" name="layers"></pe-icon>Layers</pe-dock-button>
      <pe-dock-button><pe-icon slot="icon" name="fx"></pe-icon>Effects</pe-dock-button>
      <pe-dock-button><pe-icon slot="icon" name="plus"></pe-icon>Graphics</pe-dock-button>
      <pe-dock-button><pe-icon slot="icon" name="star"></pe-icon>Favorites</pe-dock-button>
      <pe-dock-button menu><pe-icon slot="icon" name="more"></pe-icon>More</pe-dock-button>
    </div>
  `;
}
customElements.define( 'pe-dock', Dock );

class Taskbar extends Base {
  static markup = `
    <style>
      ${RESET}
      :host {
        display: flex;
        height: 40px;
        justify-content: space-between;
        background: linear-gradient(90deg, #000 54%, #171411 72%, #1e1c18 84%, #0c0c0c 92%, #000);
        color: #fff;
      }
      div { display: flex; align-items: center; }
      .apps { gap: 1px; }
      .apps button { display: flex; width: 48px; height: 40px; align-items: center; justify-content: center; }
      .apps .open { width: 40px; margin: 0 4px; border-bottom: 2px solid #f5c6b6; }
      .apps .current { border-bottom: 2px solid #f5c6b6; background: #333; }
      .tray { gap: 7px; }
      time { font: 11px/17px "Open Sans", "Noto Sans", sans-serif; text-align: center; }
      .notes { position: relative; display: flex; margin: 0 6px 0 7px; padding-right: 6px; }
      .notes span {
        position: absolute;
        left: 8px;
        top: 6px;
        width: 16px;
        height: 16px;
        border: 1px solid #888;
        border-radius: 50%;
        background: #333;
        font: bold 11px/14px "Open Sans", sans-serif;
      }
      .desktop { width: 4px; height: 40px; border-left: 1px solid #555; }
    </style>
    <div class="apps">
      <button aria-label="Start"><pe-icon name="windows"></pe-icon></button>
      <button aria-label="Task view"><pe-icon name="taskView"></pe-icon></button>
      <button aria-label="Edge"><pe-icon name="edge"></pe-icon></button>
      <button class="open" aria-label="Explorer"><pe-icon name="explorer"></pe-icon></button>
      <button class="open" aria-label="Outlook"><pe-icon name="outlook"></pe-icon></button>
      <button class="open" aria-label="Internet Explorer"><pe-icon name="ie"></pe-icon></button>
      <button class="open" aria-label="Word"><pe-icon name="word"></pe-icon></button>
      <button aria-label="Excel"><pe-icon name="excel"></pe-icon></button>
      <button aria-label="Chrome"><pe-icon name="chrome"></pe-icon></button>
      <button aria-label="Access"><pe-icon name="access"></pe-icon></button>
      <button class="current" aria-label="Photo editor"><pe-icon name="logoSmall"></pe-icon></button>
    </div>
    <div class="tray">
      <pe-icon name="caretUp"></pe-icon>
      <pe-icon name="network"></pe-icon>
      <pe-icon name="speaker"></pe-icon>
      <time>1:53 PM<br>12/18/2016</time>
      <button class="notes" aria-label="Notifications"><pe-icon name="notes"></pe-icon><span>3</span></button>
      <span class="desktop"></span>
    </div>
  `;
}
customElements.define( 'pe-taskbar', Taskbar );

class App extends Base {
  static markup = `
    <style>
      :host { display: flex; flex-direction: column; min-height: 100vh; }
      main { display: grid; flex: 1; grid-template-columns: 81px minmax(0, 1fr) 262px; }
      .center { display: flex; flex-direction: column; }
      pe-document-view { flex: 1; }
    </style>
    <pe-menu-bar></pe-menu-bar>
    <pe-mode-bar></pe-mode-bar>
    <main>
      <pe-toolbox></pe-toolbox>
      <div class="center">
        <pe-document-view></pe-document-view>
        <pe-tool-options></pe-tool-options>
      </div>
      <pe-layers-panel></pe-layers-panel>
    </main>
    <pe-dock></pe-dock>
    <pe-taskbar></pe-taskbar>
  `;
}
customElements.define( 'pe-app', App );
</script>
</body>
</html>
